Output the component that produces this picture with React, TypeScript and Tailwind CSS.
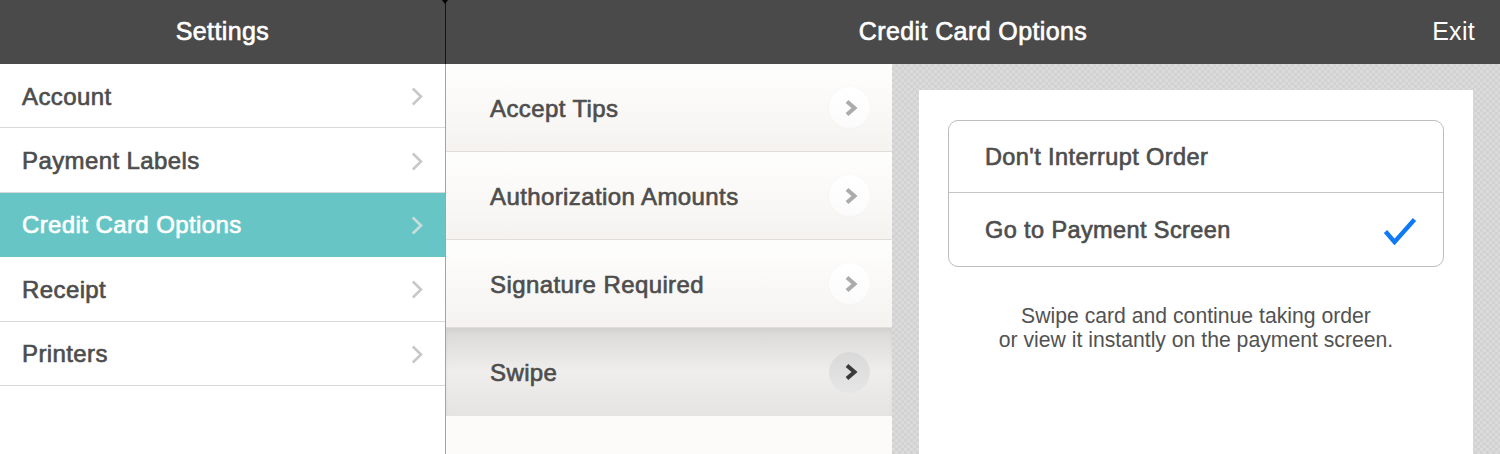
import { type ReactNode } from 'react';

const font = { fontFamily: '"Liberation Sans", Arial, sans-serif' };

const sideItems = ['Account', 'Payment Labels', 'Credit Card Options', 'Receipt', 'Printers'];
const midItems = ['Accept Tips', 'Authorization Amounts', 'Signature Required', 'Swipe'];

function SideChevron({ color }: { color: string }) {
  return (
    <svg width="12" height="19" viewBox="0 0 12 19" fill="none">
      <polyline points="1.8,1.5 10,9.5 1.8,17.5" stroke={color} strokeWidth="2.6" />
    </svg>
  );
}

function RoundChevron({ active }: { active: boolean }) {
  return (
    <div
      className={
        active
          ? 'flex h-[41px] w-[41px] items-center justify-center rounded-full bg-gradient-to-b from-[#d9d9d9] to-[#e6e6e6]'
          : 'flex h-[41px] w-[41px] items-center justify-center rounded-full bg-gradient-to-b from-white to-[#fbfbfb] shadow-[0_0_2px_rgba(0,0,0,0.04)]'
      }
    >
      <svg width="16" height="20" viewBox="0 0 16 20" fill="none" className="ml-[3px]">
        <polyline
          points="4,3.5 11.5,10 4,16.5"
          stroke={active ? '#3a3a3a' : '#ababab'}
          strokeWidth="4"
        />
      </svg>
    </div>
  );
}

function Medium({ children, className = '' }: { children: ReactNode; className?: string }) {
  return <span className={`[-webkit-text-stroke:0.65px] tracking-[0.4px] ${className}`}>{children}</span>;
}

export default function App() {
  return (
    <div style={font} className="flex h-[454px] w-[1500px] flex-col overflow-hidden bg-white">
      {/* top bar */}
      <header className="flex h-16 shrink-0 bg-[#4a4a4a] text-white">
        <div className="flex w-[445px] items-center justify-center">
          <Medium className="text-[25px]">Settings</Medium>
        </div>
        <div className="relative w-px bg-[#141414]">
          <div className="absolute left-[-3px] top-0 h-0 w-0 border-x-[3.5px] border-t-[4px] border-x-transparent border-t-[#000]" />
        </div>
        <div className="grid flex-1 grid-cols-[1fr_auto_1fr] items-center">
          <div />
          <Medium className="text-[25px]">Credit Card Options</Medium>
          <div className="flex justify-end pr-[25px]">
            <span className="text-[25px] tracking-[0.3px]">Exit</span>
          </div>
        </div>
      </header>

      <div className="flex min-h-0 flex-1">
        {/* settings sidebar */}
        <nav className="w-[446px] shrink-0 border-r border-[#a3a3a3] bg-white">
          {sideItems.map((item) => {
            const active = item === 'Credit Card Options';
            return (
              <div
                key={item}
                className={
                  active
                    ? 'flex h-[64.4px] items-center justify-between border-b border-[#67c6c5] bg-[#67c6c5] pl-[22px] pr-[22px] pt-[2px] text-white'
                    : 'flex h-[64.4px] items-center justify-between border-b border-[#d9d9d9] pl-[22px] pr-[22px] pt-[2px] text-[#4d4d4d]'
                }
              >
                <Medium className="text-[24px]">{item}</Medium>
                <SideChevron color={active ? '#c9dedd' : '#c8c8c8'} />
              </div>
            );
          })}
        </nav>

        {/* option list */}
        <section className="flex w-[446px] shrink-0 flex-col bg-[#fbfaf9]">
          {midItems.map((item) => {
            const active = item === 'Swipe';
            return (
              <div
                key={item}
                className={
                  active
                    ? 'flex h-[88px] items-center justify-between bg-gradient-to-b from-[#dad8d6] via-[#efeeec] to-[#e6e4e2] pl-[44px] pr-[22px] text-[#4d4d4d] shadow-[inset_0_3px_4px_rgba(0,0,0,0.04)]'
                    : 'flex h-[88px] items-center justify-between border-b border-[#e0ddda] bg-gradient-to-b from-[#fefefd] to-[#f5f3f0] pl-[44px] pr-[22px] text-[#4d4d4d]'
                }
              >
                <Medium className="pt-[2px] text-[24px]">{item}</Medium>
                <RoundChevron active={active} />
              </div>
            );
          })}
          <div className="flex-1 bg-[#fcfbfa]" />
        </section>

        {/* detail panel */}
        <main className="flex flex-1 flex-col bg-[#d6d6d6] bg-[repeating-conic-gradient(#d2d2d2_0_25%,#dbdbdb_0_50%)] bg-[length:6px_6px] px-[27px] pt-[26px]">
          <div className="flex flex-1 flex-col bg-white px-[29px] pt-[30px]">
            <div className="overflow-hidden rounded-[10px] border border-[#bdbdbd] text-[#4d4d4d]">
              <div className="flex h-[72px] items-center border-b border-[#c4c4c4] pl-[36px] pt-[2px]">
                <Medium className="text-[23.5px] tracking-[0.1px]">Don't Interrupt Order</Medium>
              </div>
              <div className="flex h-[73px] items-center justify-between pl-[36px] pr-[26px] pt-[2px]">
                <Medium className="text-[23.5px] tracking-[0.1px]">Go to Payment Screen</Medium>
                <svg width="34" height="28" viewBox="0 0 34 28" fill="none">
                  <path d="M2.5 14.5 L11.5 25 L31.5 2.5" stroke="#0f7af5" strokeWidth="4.4" />
                </svg>
              </div>
            </div>
            <p className="mt-[37px] text-center text-[21.2px] leading-6 text-[#525252]">
              Swipe card and continue taking order
              <br />
              or view it instantly on the payment screen.
            </p>
          </div>
        </main>
      </div>
    </div>
  );
}
